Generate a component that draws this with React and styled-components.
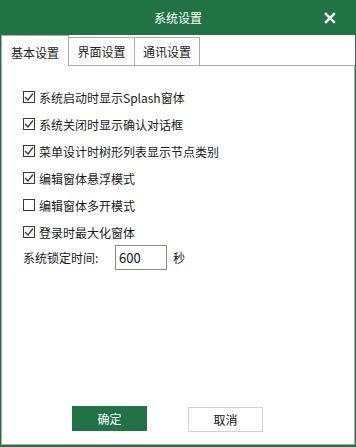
import React, { useState } from "react";
import styled, { createGlobalStyle } from "styled-components";

const GREEN = "#217346";

const Global = createGlobalStyle`
  html, body { margin: 0; padding: 0; background: #fff; }
  body { font-family: "Noto Sans CJK SC", "Microsoft YaHei", sans-serif; }
  * { box-sizing: border-box; }
`;

const Window = styled.div`
  width: 356px;
  height: 447px;
  display: flex;
  flex-direction: column;
  background: #fff;
  border-left: 1px solid ${GREEN};
  border-right: 1px solid ${GREEN};
  border-bottom: 2px solid ${GREEN};
`;

const TitleBar = styled.div`
  height: 35px;
  margin: 0 -1px;
  background: ${GREEN};
  color: #fff;
  font-size: 12px;
  display: flex;
  align-items: center;
  justify-content: center;
  position: relative;
`;

const Close = styled.button`
  position: absolute;
  right: 20px;
  top: 11px;
  width: 13px;
  height: 13px;
  padding: 0;
  border: none;
  background: transparent;
  display: flex;
  align-items: center;
  justify-content: center;
`;

const TabBar = styled.div`
  height: 31px;
  display: flex;
  align-items: flex-end;
  border-bottom: 1px solid #a9a9a9;
`;

const Tab = styled.div`
  height: ${(p) => (p.$active ? "31px" : "28px")};
  width: ${(p) => p.$w}px;
  margin-left: ${(p) => (p.$first ? "0" : "-1px")};
  margin-bottom: ${(p) => (p.$active ? "-1px" : "0")};
  border: 1px solid #a9a9a9;
  border-bottom: ${(p) => (p.$active ? "none" : "0")};
  background: #fff;
  font-size: 12px;
  color: #222;
  display: flex;
  align-items: center;
  justify-content: center;
  padding-top: ${(p) => (p.$active ? "3px" : "0")};
  position: relative;
  z-index: ${(p) => (p.$active ? 1 : 0)};
`;

const Panel = styled.div`
  flex: 1;
  display: flex;
  flex-direction: column;
  border-left: 1px solid #a9a9a9;
  border-right: 1px solid #a9a9a9;
  border-bottom: 1px solid #a9a9a9;
  padding: 21px 0 12px 21px;
`;

const OptionList = styled.div`
  display: flex;
  flex-direction: column;
  gap: 7px;
`;

const Row = styled.label`
  height: 20px;
  display: flex;
  align-items: center;
  font-size: 12px;
  color: #1a1a1a;
  cursor: default;
`;

const Box = styled.span`
  width: 12px;
  height: 12px;
  border: 1px solid #3a3a3a;
  margin-right: 4px;
  display: flex;
  align-items: center;
  justify-content: center;
  background: #fff;
`;

const Label = styled.span`
  white-space: nowrap;
`;

const TimeRow = styled.div`
  margin-top: 2px;
  height: 26px;
  display: flex;
  align-items: center;
  font-size: 12px;
  color: #1a1a1a;
`;

const TimeLabel = styled.span`
  width: 92px;
`;

const Input = styled.input`
  width: 52px;
  height: 25px;
  border: 1px solid #8a8a8a;
  padding: 0 0 0 3px;
  font-family: "Noto Sans CJK SC", sans-serif;
  font-size: 13px;
  color: #111;
  outline: none;
`;

const Unit = styled.span`
  margin-left: 6px;
`;

const Buttons = styled.div`
  margin-top: auto;
  display: flex;
  padding-left: 49px;
  gap: 41px;
  align-items: flex-start;
`;

const Button = styled.button`
  width: 75px;
  height: 25px;
  margin-top: ${(p) => (p.$primary ? "0" : "1px")};
  border: 1px solid ${(p) => (p.$primary ? GREEN : "#d2d2d2")};
  background: ${(p) => (p.$primary ? GREEN : "#fff")};
  color: ${(p) => (p.$primary ? "#fff" : "#111")};
  font-family: "Noto Sans CJK SC", sans-serif;
  font-size: 12px;
  padding: 0;
`;

function Check({ checked }) {
  return (
    <Box>
      {checked && (
        <svg width="10" height="10" viewBox="0 0 10 10">
          <path d="M1 5 L4 8 L9 1.5" fill="none" stroke="#3a3a3a" strokeWidth="1.3" />
        </svg>
      )}
    </Box>
  );
}

const options = [
  ["系统启动时显示Splash窗体", true],
  ["系统关闭时显示确认对话框", true],
  ["菜单设计时树形列表显示节点类别", true],
  ["编辑窗体悬浮模式", true],
  ["编辑窗体多开模式", false],
  ["登录时最大化窗体", true],
];

export default function App() {
  const [vals, setVals] = useState(options.map((o) => o[1]));
  return (
    <Window>
      <Global />
      <TitleBar>
        系统设置
        <Close aria-label="关闭">
          <svg width="12" height="12" viewBox="0 0 12 12">
            <path d="M2 2 L10 10 M10 2 L2 10" stroke="#fff" strokeWidth="2.4" strokeLinecap="square" />
          </svg>
        </Close>
      </TitleBar>
      <TabBar>
        <Tab $active $first $w={68}>基本设置</Tab>
        <Tab $w={67}>界面设置</Tab>
        <Tab $w={66}>通讯设置</Tab>
      </TabBar>
      <Panel>
        <OptionList>
          {options.map(([text], i) => (
            <Row key={text} onClick={() => setVals(vals.map((v, j) => (j === i ? !v : v)))}>
              <Check checked={vals[i]} />
              <Label>{text}</Label>
            </Row>
          ))}
        </OptionList>
        <TimeRow>
          <TimeLabel>系统锁定时间:</TimeLabel>
          <Input defaultValue="600" />
          <Unit>秒</Unit>
        </TimeRow>
        <Buttons>
          <Button $primary>确定</Button>
          <Button>取消</Button>
        </Buttons>
      </Panel>
    </Window>
  );
}
